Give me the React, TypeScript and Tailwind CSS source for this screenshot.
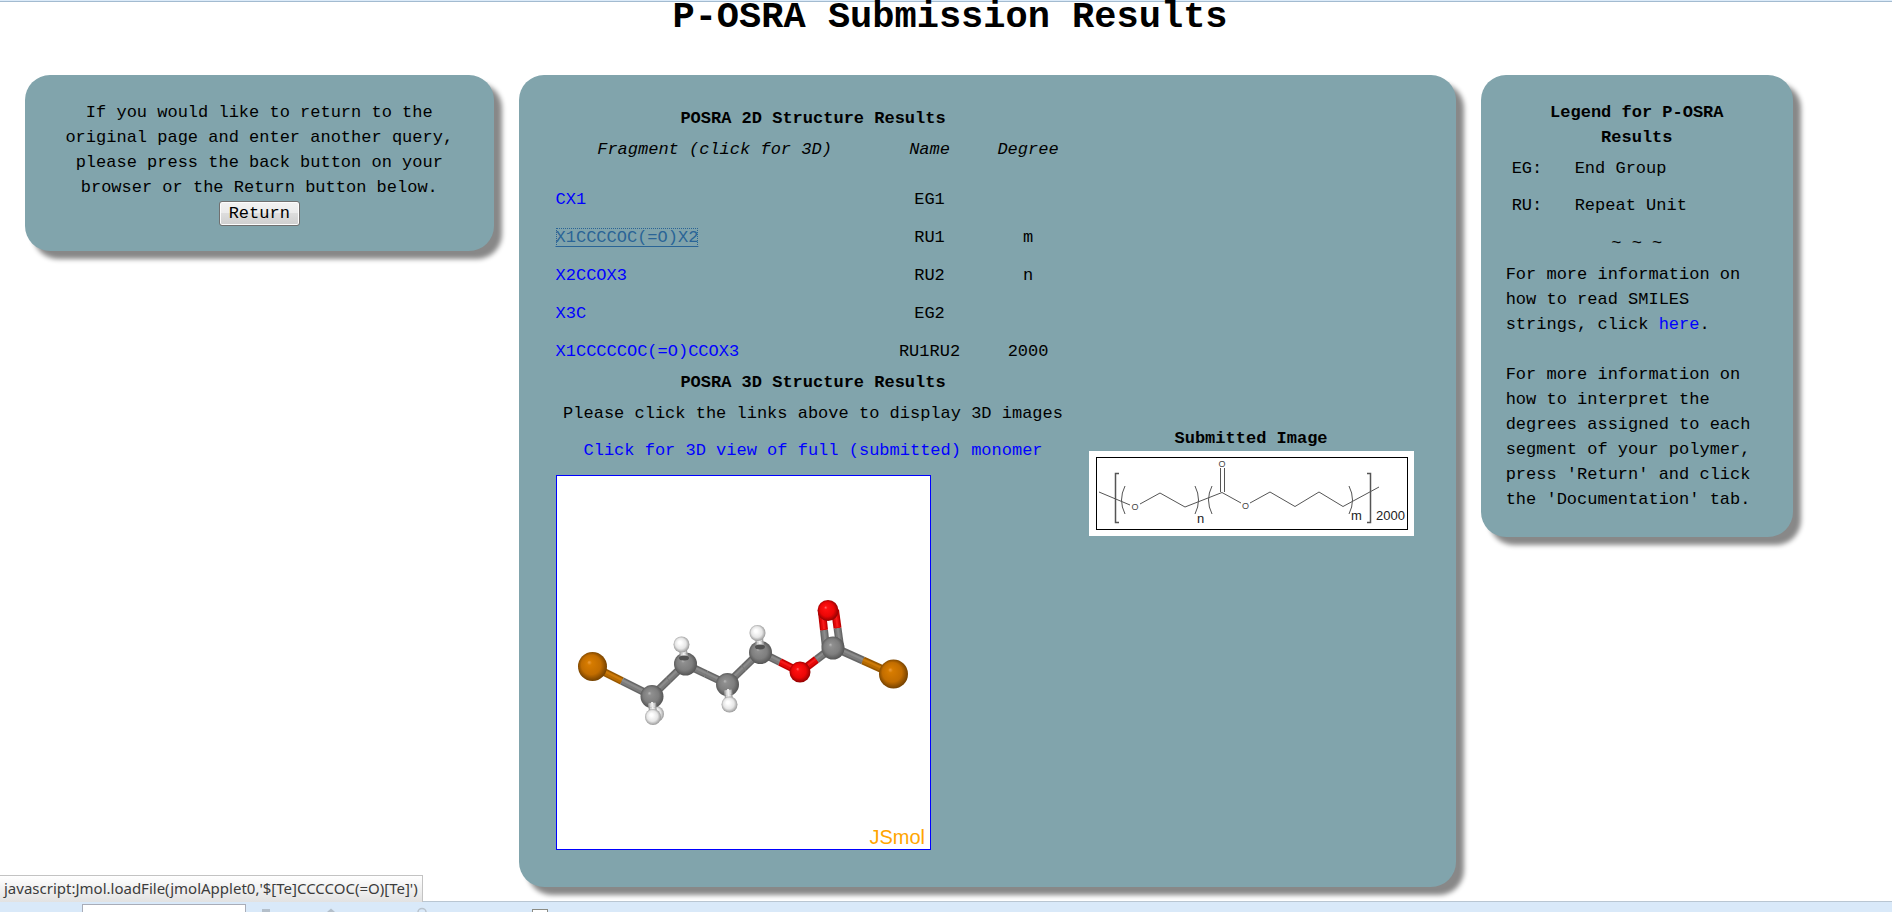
import React from "react";

type Row = { fragment: string; name: string; degree: string; active?: boolean };

const rows: Row[] = [
  { fragment: "CX1", name: "EG1", degree: "" },
  { fragment: "X1CCCCOC(=O)X2", name: "RU1", degree: "m", active: true },
  { fragment: "X2CCOX3", name: "RU2", degree: "n" },
  { fragment: "X3C", name: "EG2", degree: "" },
  { fragment: "X1CCCCCOC(=O)CCOX3", name: "RU1RU2", degree: "2000" },
];

const panel = "rounded-[25px] bg-[#81a4ac] p-[25px] shadow-[8px_8px_5px_#888888]";
const link = "text-[#0000ff]";

function Atom({ x, y, r, kind }: { x: number; y: number; r: number; kind: "te" | "c" | "o" | "h" }) {
  return <circle cx={x} cy={y} r={r} fill={`url(#atom-${kind})`} />;
}

function Bond({ a, b, from, to, w = 8 }: { a: [number, number]; b: [number, number]; from: string; to?: string; w?: number }) {
  const m: [number, number] = [(a[0] + b[0]) / 2, (a[1] + b[1]) / 2];
  const half = (p: number[], q: number[], color: string, edge: string, hi: string) => (
    <g>
      <line x1={p[0]} y1={p[1]} x2={q[0]} y2={q[1]} stroke={edge} strokeWidth={w} />
      <line x1={p[0]} y1={p[1]} x2={q[0]} y2={q[1]} stroke={color} strokeWidth={w * 0.65} />
      <line x1={p[0]} y1={p[1] - 1} x2={q[0]} y2={q[1] - 1} stroke={hi} strokeWidth={w * 0.25} />
    </g>
  );
  const tone: Record<string, [string, string, string]> = {
    te: ["#b86b00", "#965700", "#cc7a08"],
    c: ["#7b7b7b", "#666666", "#8b8b8b"],
    o: ["#e40808", "#c00000", "#f51a1a"],
    h: ["#d5d5d5", "#a4a4a4", "#f0f0f0"],
  };
  const t1 = tone[from];
  const t2 = tone[to ?? from];
  return (
    <g>
      {half(a, m, t1[0], t1[1], t1[2])}
      {half(m, b, t2[0], t2[1], t2[2])}
    </g>
  );
}

function Gradient({ id, stops }: { id: string; stops: [string, string, string, string] }) {
  return (
    <radialGradient id={id} cx="0.5" cy="0.5" r="0.56" fx="0.38" fy="0.35">
      <stop offset="0" stopColor={stops[0]} />
      <stop offset="0.15" stopColor={stops[1]} />
      <stop offset="0.6" stopColor={stops[2]} />
      <stop offset="1" stopColor={stops[3]} />
    </radialGradient>
  );
}

function Molecule() {
  return (
    <svg viewBox="0 0 373 373" className="block h-full w-full" role="img" aria-label="3D structure">
      <defs>
        <Gradient id="atom-te" stops={["#ee9d3c", "#d67b00", "#c26d00", "#5e3500"]} />
        <Gradient id="atom-c" stops={["#bbbbbb", "#8f8f8f", "#7e7e7e", "#4a4a4a"]} />
        <Gradient id="atom-o" stops={["#ff6a6a", "#ff1010", "#ec0606", "#780000"]} />
        <Gradient id="atom-h" stops={["#ffffff", "#ffffff", "#e6e6e6", "#858585"]} />
      </defs>
      <Bond a={[35, 190]} b={[95, 220]} from="te" to="c" />
      <Bond a={[95, 220]} b={[128, 188]} from="c" />
      <Bond a={[128, 188]} b={[170, 208]} from="c" />
      <Bond a={[170, 208]} b={[203, 176]} from="c" />
      <Bond a={[203, 176]} b={[243, 196]} from="c" to="o" />
      <Bond a={[243, 196]} b={[276, 171]} from="o" to="c" />
      <Bond a={[276, 171]} b={[336, 198]} from="c" to="te" />
      <Bond a={[269, 172]} b={[265, 136]} from="c" to="o" />
      <Bond a={[283, 170]} b={[278, 134]} from="c" to="o" />
      <Atom x={35.5} y={190.5} r={14.5} kind="te" />
      <Atom x={336.5} y={198} r={14.5} kind="te" />
      <Atom x={271} y={134.5} r={10.5} kind="o" />
      <Atom x={243} y={196} r={10.5} kind="o" />
      <Atom x={276} y={172} r={11.5} kind="c" />
      <Atom x={99} y={238} r={8} kind="h" />
      <Atom x={95} y={220.5} r={11.5} kind="c" />
      <Atom x={128.5} y={188} r={11.5} kind="c" />
      <Atom x={170.5} y={208.5} r={11.5} kind="c" />
      <Atom x={203.5} y={176.5} r={11.5} kind="c" />
      <Bond a={[95, 227]} b={[96, 236]} from="h" />
      <Bond a={[126, 174]} b={[127, 181]} from="h" />
      <Bond a={[171, 214]} b={[172, 224]} from="h" />
      <Bond a={[202, 162]} b={[203, 170]} from="h" />
      <ellipse cx="127" cy="182" rx="5" ry="2.5" fill="#505050" />
      <ellipse cx="203" cy="171" rx="5" ry="2.5" fill="#505050" />
      <Atom x={96} y={241} r={8} kind="h" />
      <Atom x={124.5} y={168.5} r={8} kind="h" />
      <Atom x={172.5} y={228.5} r={8} kind="h" />
      <Atom x={200.5} y={157} r={8} kind="h" />
      <text x="368" y="368" textAnchor="end" fontSize="20" fill="#ffa500" fontFamily="'Liberation Sans', Arial, sans-serif">
        JSmol
      </text>
    </svg>
  );
}

function PolymerDrawing() {
  return (
    <svg viewBox="0 0 325 85" className="block h-[85px] w-[325px] max-w-full bg-white" role="img" aria-label="Submitted polymer">
      <rect x="7.5" y="6.5" width="311" height="72" fill="none" stroke="#000000" />
      <g fill="none" stroke="#555555" strokeWidth="1">
        <path d="M10 41 L41 54 M51 53 L71 42 L96 56 L133 41.5 L152 52 M161 52 L181 41 L206 55.5 L230 41 L254 55.5 L290 36" />
        <path d="M131.500 41V17 M135.500 41V17" />
        <path d="M30 22.500H26.500V71.500H30 M278 22.500H281.500V71.500H278" strokeWidth="1.500" />
        <path d="M36 35Q29 49 36 63 M106 35Q113 49 106 63 M123 35Q116 49 123 63 M260 35Q267 49 260 63" />
      </g>
      <g fontFamily="'Liberation Sans', Arial, sans-serif" fill="#444444" fontSize="9" textAnchor="middle">
        <text x="46" y="59">O</text>
        <text x="133" y="16">O</text>
        <text x="156.500" y="58">O</text>
      </g>
      <g fontFamily="'Liberation Sans', Arial, sans-serif" fill="#222222" fontSize="13">
        <text x="108" y="72">n</text>
        <text x="262" y="69">m</text>
        <text x="287" y="69">2000</text>
      </g>
    </svg>
  );
}

export default function App() {
  return (
    <div className="flex min-h-screen flex-col bg-white font-['Liberation_Mono','Courier_New',monospace] text-[17px] leading-[25px] text-black">
      <div className="h-[2px] border-b border-[#a3bbd0] bg-[#dcebf9]" />
      <h1 className="h-[73px] pl-[8px] text-center text-[37px] leading-[30px] font-bold">P-OSRA Submission Results</h1>

      <main className="grid grid-cols-[3fr_6fr_2fr] items-start gap-[25px] pr-[99px] pl-[25px]">
        <section className={`${panel} text-center`}>
          <p>
            If you would like to return to the original page and enter another query, please press the back button on
            your browser or the Return button below.
          </p>
          <button
            type="button"
            className="mx-auto mt-[1px] block h-[25px] rounded-[3px] border border-[#707070] bg-[linear-gradient(#f2f2f2_0%,#ebebeb_50%,#dddddd_50%,#cfcfcf_100%)] px-[9px] leading-[22px] shadow-[inset_0_0_0_1px_#fcfcfc]"
          >
            Return
          </button>
        </section>

        <section className={panel}>
          <div className="flex items-center gap-[12px] p-[6px]">
            <div className="w-[527px] px-[6px] text-center">
              <table className="-mx-[6px] h-[239px] w-[527px] table-fixed border-collapse">
                <caption className="font-bold">POSRA 2D Structure Results</caption>
                <colgroup>
                  <col className="w-[330px]" />
                  <col className="w-[100px]" />
                  <col className="w-[97px]" />
                </colgroup>
                <thead>
                  <tr className="italic">
                    <th className="px-[6px] pt-[6px] pb-[18px] font-normal">Fragment (click for 3D)</th>
                    <th className="px-[6px] pt-[6px] pb-[18px] font-normal">Name</th>
                    <th className="px-[6px] pt-[6px] pb-[18px] font-normal">Degree</th>
                  </tr>
                </thead>
                <tbody>
                  {rows.map((r) => (
                    <tr key={r.fragment}>
                      <td className="p-[6px] text-left">
                        <a
                          href="#viewer"
                          className={
                            r.active
                              ? "text-[#2a6496] underline underline-offset-4 outline outline-dotted outline-[#2a6496] -outline-offset-1"
                              : link
                          }
                        >
                          {r.fragment}
                        </a>
                      </td>
                      <td className="p-[6px]">{r.name}</td>
                      <td className="p-[6px]">{r.degree}</td>
                    </tr>
                  ))}
                </tbody>
              </table>
              <h2 className="font-bold">POSRA 3D Structure Results</h2>
              <p className="py-[6px] whitespace-nowrap">Please click the links above to display 3D images</p>
              <p className="py-[6px]">
                <a href="#viewer" className={`${link} whitespace-nowrap`}>
                  Click for 3D view of full (submitted) monomer
                </a>
              </p>
              <div id="viewer" className="my-[6px] h-[375px] w-[375px] border border-[#0000ff] bg-white">
                <Molecule />
              </div>
            </div>
            <div className="min-w-0">
              <h2 className="text-center font-bold">Submitted Image</h2>
              <PolymerDrawing />
            </div>
          </div>
        </section>

        <section className={panel}>
          <h2 className="text-center font-bold">
            Legend for P-OSRA
            <br />
            Results
          </h2>
          <table className="h-[112px] w-full border-collapse text-left">
            <tbody>
              <tr>
                <th className="w-[63px] p-[6px] font-normal">EG:</th>
                <td className="p-[6px]">End Group</td>
              </tr>
              <tr>
                <th className="w-[63px] p-[6px] font-normal">RU:</th>
                <td className="p-[6px]">Repeat Unit</td>
              </tr>
              <tr>
                <td colSpan={2} className="p-[6px] text-center">
                  ~ ~ ~
                </td>
              </tr>
            </tbody>
          </table>
          <p>
            For more information on how to read SMILES strings, click{" "}
            <a href="#smiles" className={link}>
              here
            </a>
            .
          </p>
          <p className="mt-[25px]">
            For more information on how to interpret the degrees assigned to each segment of your polymer, press
            'Return' and click the 'Documentation' tab.
          </p>
        </section>
      </main>

      <footer className="relative mt-auto h-[11px] border-t border-[#b9c6d2] bg-[#d9e9f9]">
        <div className="absolute bottom-full left-0 flex h-[27px] items-center border-t border-r border-[#c3c3c3] bg-linear-to-b from-white to-[#e2e2e2] px-[4px] pb-[2px] font-['Noto_Sans','Open_Sans',sans-serif] text-[15px] whitespace-nowrap text-[#3c3c3c]">
          javascript:Jmol.loadFile(jmolApplet0,'$[Te]CCCCOC(=O)[Te]')
        </div>
        <div className="flex h-[10px] items-end overflow-hidden pl-[82px]">
          <input aria-label="Find" className="h-[8px] w-[164px] border-x border-t border-[#a9adb8] bg-white" />
          <svg className="h-[10px] w-[286px]" viewBox="0 0 286 10" aria-hidden="true">
            <rect x="16" y="7" width="8" height="3" fill="#b4bfca" />
            <path d="M81 10L85 6.500L89 10Z" fill="#b4bfca" />
            <path d="M172 10A4 3.500 0 0 1 180 10" fill="none" stroke="#b9c3cd" strokeWidth="1.500" />
          </svg>
          <input type="checkbox" aria-label="Match case" className="h-[3px] w-[16px] appearance-none border-x border-t border-[#8b8b83] bg-white" />
        </div>
      </footer>
    </div>
  );
}
